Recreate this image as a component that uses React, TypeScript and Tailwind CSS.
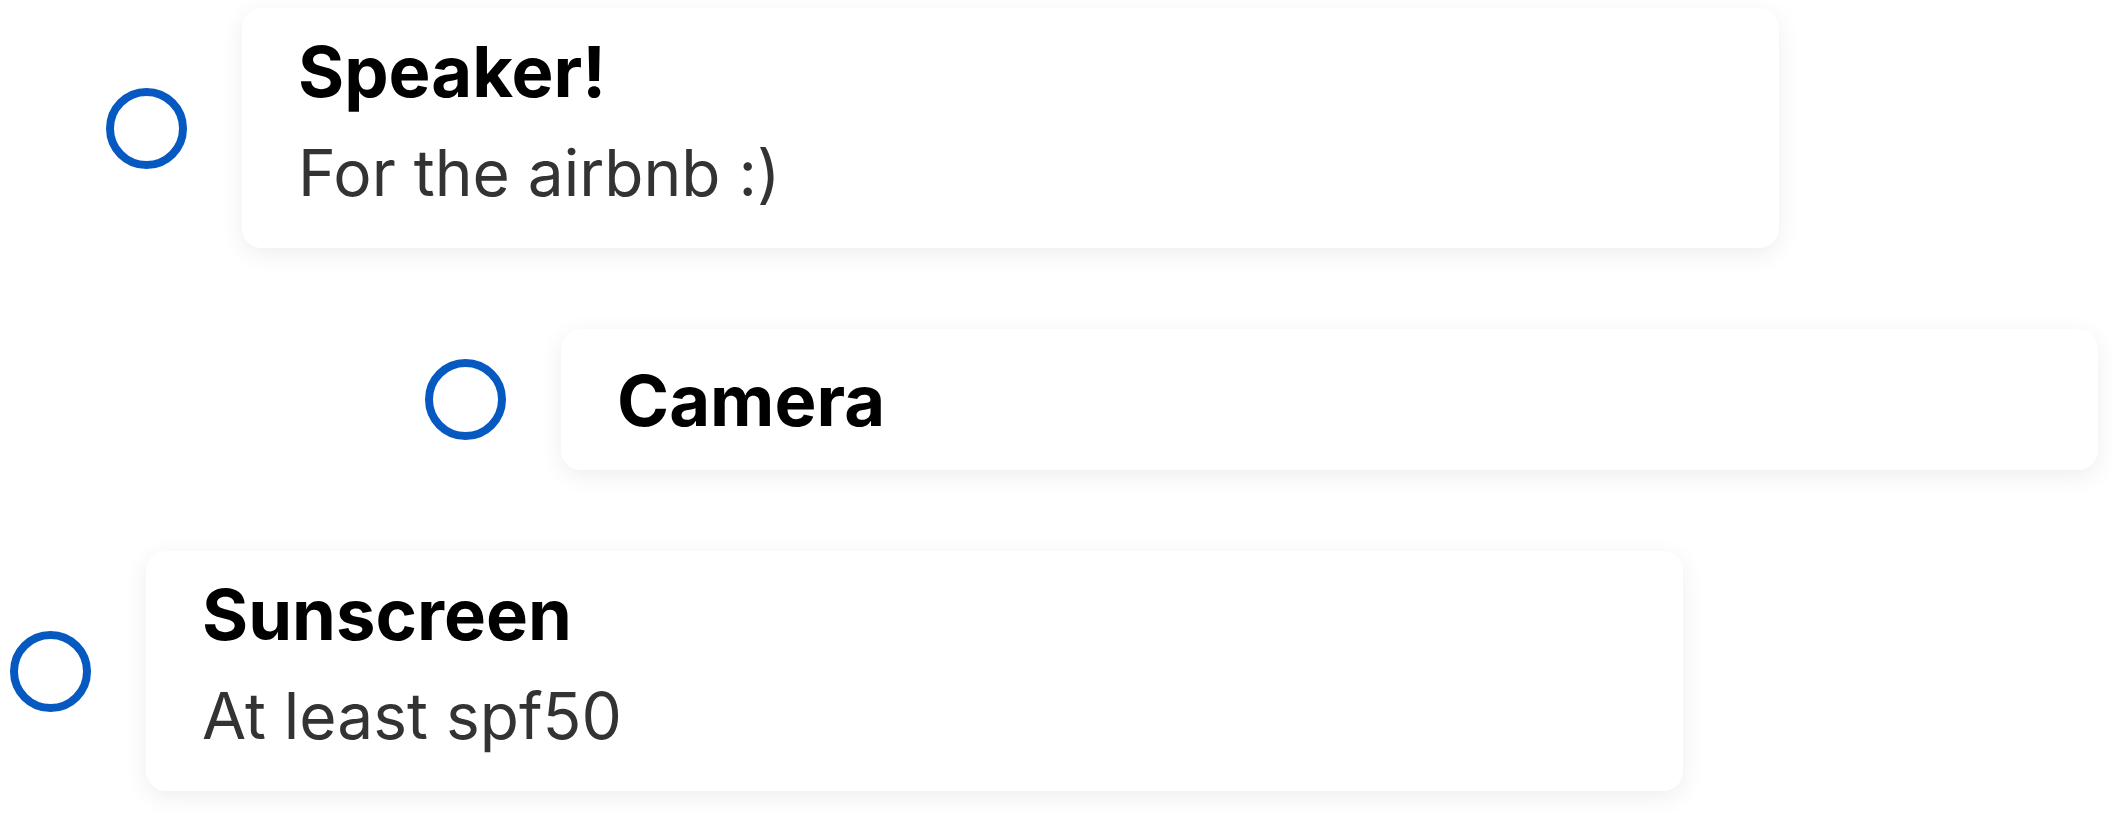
const ITEMS = [
  { title: "Speaker!", note: "For the airbnb :)", indent: "ml-[106px]" },
  { title: "Camera", note: "", indent: "ml-[425px]" },
  { title: "Sunscreen", note: "At least spf50", indent: "ml-[10px]" },
];

function Item({ title, note, indent }: { title: string; note: string; indent: string }) {
  return (
    <div className={`flex items-center gap-[55px] ${indent}`}>
      <div className="w-[81px] h-[81px] shrink-0 rounded-full border-[8px] border-[#0559c0]" />
      <div
        className={`w-[1537px] rounded-[20px] bg-white px-14 shadow-[0_6px_24px_rgba(0,0,0,0.07)] ${
          note ? "pt-[21px] pb-[27px]" : "pt-[29px] pb-[27px]"
        }`}
      >
        <div className="text-[70.5px] leading-[85px] font-bold text-black">{title}</div>
        {note && (
          <div className="mt-[11px] text-[64px] leading-[96px] font-normal text-[#333333]">{note}</div>
        )}
      </div>
    </div>
  );
}

export default function App() {
  return (
    <div
      className="w-[2112px] h-[815px] overflow-hidden bg-white pt-[8px] flex flex-col gap-[81px]"
      style={{ fontFamily: "Inter, 'Noto Sans', sans-serif" }}
    >
      {ITEMS.map((it) => (
        <Item key={it.title} {...it} />
      ))}
    </div>
  );
}
